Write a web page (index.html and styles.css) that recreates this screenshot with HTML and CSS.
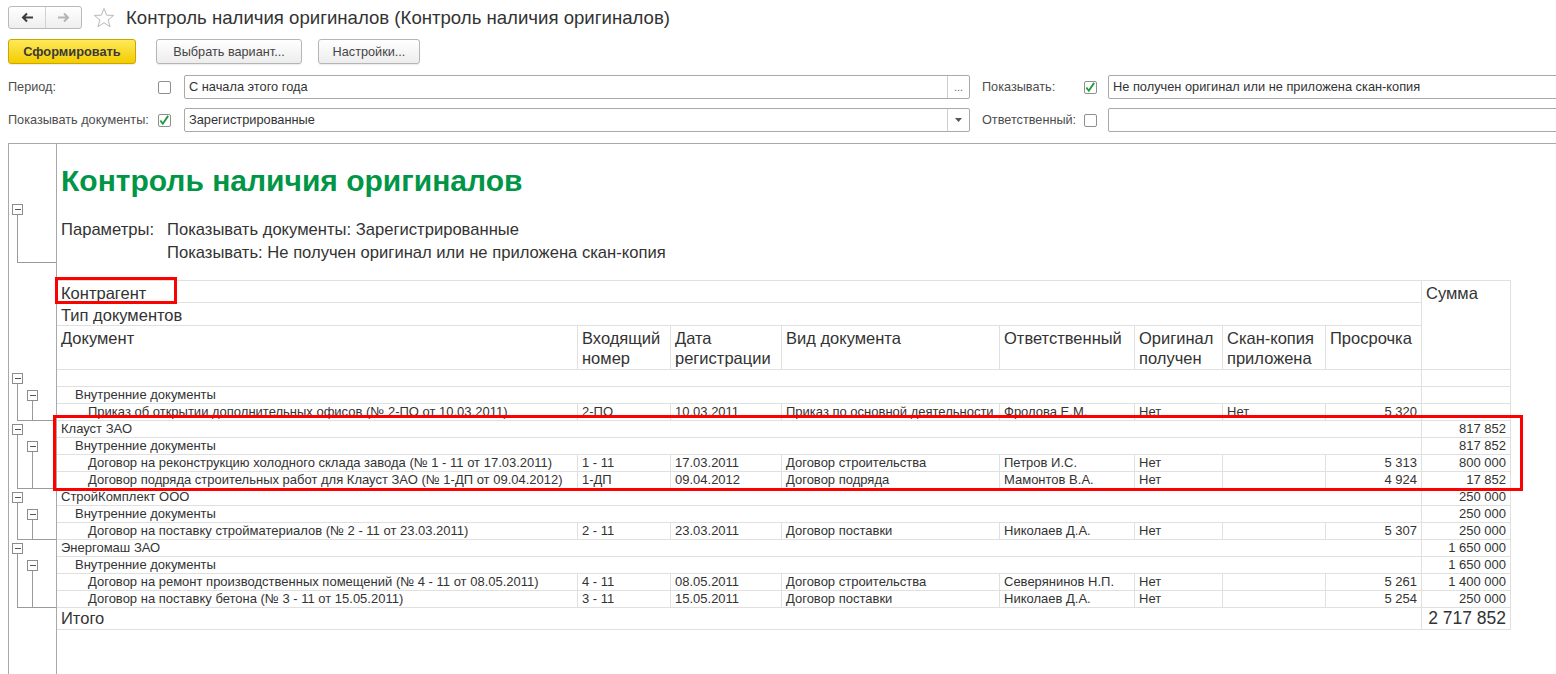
FILE: index.html
```html
<!DOCTYPE html>
<html lang="ru">
<head>
  <meta charset="UTF-8" />
  <title>Контроль наличия оригиналов</title>
  <link rel="stylesheet" href="styles.css">
</head>
<body>
  <div class="topbar">
    <div class="nav">
      <button class="nav-btn">
        <svg width="13" height="11" viewBox="0 0 13 11"><path d="M12 5.5H2M6 1.5L2 5.5L6 9.5" fill="none" stroke="#3c3c3c" stroke-width="2"/></svg>
      </button>
      <button class="nav-btn">
        <svg width="13" height="11" viewBox="0 0 13 11"><path d="M1 5.5H11M7 1.5L11 5.5L7 9.5" fill="none" stroke="#b4b4b4" stroke-width="2"/></svg>
      </button>
    </div>
    <svg class="star" width="22" height="22" viewBox="0 0 22 22">
      <polygon points="11,1.5 13.6,8.2 20.6,8.4 15.1,12.8 17.1,19.8 11,15.7 4.9,19.8 6.9,12.8 1.4,8.4 8.4,8.2" fill="none" stroke="#b8b8b8" stroke-width="1"/>
    </svg>
    <h1 class="page-title">Контроль наличия оригиналов (Контроль наличия оригиналов)</h1>
  </div>

  <div class="actions">
    <button class="btn btn-primary">Сформировать</button>
    <button class="btn btn-variant">Выбрать вариант...</button>
    <button class="btn btn-settings">Настройки...</button>
  </div>

  <div class="filters">
    <div class="filter-row">
      <span class="f-label">Период:</span>
      <span class="check"></span>
      <div class="field field-main">
        <span class="field-text">С начала этого года</span>
        <span class="field-btn">...</span>
      </div>
      <span class="f-label f-label-right">Показывать:</span>
      <span class="check">
        <svg width="13" height="13" viewBox="0 0 13 13"><path d="M2.5 6.5L5.2 10L11 1.5" fill="none" stroke="#1e9c3c" stroke-width="2"/></svg>
      </span>
      <div class="field field-side">
        <span class="field-text">Не получен оригинал или не приложена скан-копия</span>
      </div>
    </div>
    <div class="filter-row">
      <span class="f-label">Показывать документы:</span>
      <span class="check">
        <svg width="13" height="13" viewBox="0 0 13 13"><path d="M2.5 6.5L5.2 10L11 1.5" fill="none" stroke="#1e9c3c" stroke-width="2"/></svg>
      </span>
      <div class="field field-main">
        <span class="field-text">Зарегистрированные</span>
        <span class="field-btn">
          <svg width="7" height="4" viewBox="0 0 7 4"><path d="M0 0H7L3.5 4Z" fill="#555"/></svg>
        </span>
      </div>
      <span class="f-label f-label-right">Ответственный:</span>
      <span class="check"></span>
      <div class="field field-side"></div>
    </div>
  </div>

  <div class="report">
    <div class="gutter">
      <svg class="tree" width="47" height="226">
        <rect x="3.5" y="60.5" width="10" height="10" class="box"/>
        <path d="M5.5 65.5H11.5" class="minus"/>
        <path d="M8.5 71V118.5H47" class="line"/>
      </svg>
      <svg class="tree" width="47" height="51">
        <rect x="3.5" y="3.5" width="10" height="10" class="box"/>
        <path d="M5.5 8.5H11.5" class="minus"/>
        <rect x="18.5" y="20.5" width="10" height="10" class="box"/>
        <path d="M20.5 25.5H26.5" class="minus"/>
        <path d="M8.5 14V50.5H47M23.5 31V50.5" class="line"/>
      </svg>
      <svg class="tree" width="47" height="68">
        <rect x="3.5" y="3.5" width="10" height="10" class="box"/>
        <path d="M5.5 8.5H11.5" class="minus"/>
        <rect x="18.5" y="20.5" width="10" height="10" class="box"/>
        <path d="M20.5 25.5H26.5" class="minus"/>
        <path d="M8.5 14V67.5H47M23.5 31V67.5" class="line"/>
      </svg>
      <svg class="tree" width="47" height="51">
        <rect x="3.5" y="3.5" width="10" height="10" class="box"/>
        <path d="M5.5 8.5H11.5" class="minus"/>
        <rect x="18.5" y="20.5" width="10" height="10" class="box"/>
        <path d="M20.5 25.5H26.5" class="minus"/>
        <path d="M8.5 14V50.5H47M23.5 31V50.5" class="line"/>
      </svg>
      <svg class="tree" width="47" height="68">
        <rect x="3.5" y="3.5" width="10" height="10" class="box"/>
        <path d="M5.5 8.5H11.5" class="minus"/>
        <rect x="18.5" y="20.5" width="10" height="10" class="box"/>
        <path d="M20.5 25.5H26.5" class="minus"/>
        <path d="M8.5 14V67.5H47M23.5 31V67.5" class="line"/>
      </svg>
    </div>

    <div class="sheet">
      <h2 class="rep-title">Контроль наличия оригиналов</h2>
      <div class="params">
        <span>Параметры:</span>
        <span>Показывать документы: Зарегистрированные</span>
        <span></span>
        <span>Показывать: Не получен оригинал или не приложена скан-копия</span>
      </div>

      <div class="grid">
        <div class="head">
          <div class="hc hc-wide">Контрагент</div>
          <div class="hc hc-sum">Сумма</div>
          <div class="hc hc-wide">Тип документов</div>
          <div class="hc">Документ</div>
          <div class="hc">Входящий номер</div>
          <div class="hc">Дата регистрации</div>
          <div class="hc">Вид документа</div>
          <div class="hc">Ответственный</div>
          <div class="hc">Оригинал получен</div>
          <div class="hc">Скан-копия приложена</div>
          <div class="hc">Просрочка</div>
        </div>

        <div class="row row-group"><div class="c"></div><div class="c num"></div></div>
        <div class="row row-group"><div class="c lvl2">Внутренние документы</div><div class="c num"></div></div>
        <div class="row">
          <div class="c lvl3">Приказ об открытии дополнительных офисов (№ 2-ПО от 10.03.2011)</div>
          <div class="c">2-ПО</div><div class="c">10.03.2011</div><div class="c">Приказ по основной деятельности</div>
          <div class="c">Фролова Е.М.</div><div class="c">Нет</div><div class="c">Нет</div><div class="c num">5 320</div><div class="c num"></div>
        </div>

        <div class="row row-group"><div class="c">Клауст ЗАО</div><div class="c num">817 852</div></div>
        <div class="row row-group"><div class="c lvl2">Внутренние документы</div><div class="c num">817 852</div></div>
        <div class="row">
          <div class="c lvl3">Договор на реконструкцию холодного склада завода (№ 1 - 11 от 17.03.2011)</div>
          <div class="c">1 - 11</div><div class="c">17.03.2011</div><div class="c">Договор строительства</div>
          <div class="c">Петров И.С.</div><div class="c">Нет</div><div class="c"></div><div class="c num">5 313</div><div class="c num">800 000</div>
        </div>
        <div class="row">
          <div class="c lvl3">Договор подряда строительных работ для Клауст ЗАО (№ 1-ДП от 09.04.2012)</div>
          <div class="c">1-ДП</div><div class="c">09.04.2012</div><div class="c">Договор подряда</div>
          <div class="c">Мамонтов В.А.</div><div class="c">Нет</div><div class="c"></div><div class="c num">4 924</div><div class="c num">17 852</div>
        </div>

        <div class="row row-group"><div class="c">СтройКомплект ООО</div><div class="c num">250 000</div></div>
        <div class="row row-group"><div class="c lvl2">Внутренние документы</div><div class="c num">250 000</div></div>
        <div class="row">
          <div class="c lvl3">Договор на поставку стройматериалов (№ 2 - 11 от 23.03.2011)</div>
          <div class="c">2 - 11</div><div class="c">23.03.2011</div><div class="c">Договор поставки</div>
          <div class="c">Николаев Д.А.</div><div class="c">Нет</div><div class="c"></div><div class="c num">5 307</div><div class="c num">250 000</div>
        </div>

        <div class="row row-group"><div class="c">Энергомаш ЗАО</div><div class="c num">1 650 000</div></div>
        <div class="row row-group"><div class="c lvl2">Внутренние документы</div><div class="c num">1 650 000</div></div>
        <div class="row">
          <div class="c lvl3">Договор на ремонт производственных помещений (№ 4 - 11 от 08.05.2011)</div>
          <div class="c">4 - 11</div><div class="c">08.05.2011</div><div class="c">Договор строительства</div>
          <div class="c">Северянинов Н.П.</div><div class="c">Нет</div><div class="c"></div><div class="c num">5 261</div><div class="c num">1 400 000</div>
        </div>
        <div class="row">
          <div class="c lvl3">Договор на поставку бетона (№ 3 - 11 от 15.05.2011)</div>
          <div class="c">3 - 11</div><div class="c">15.05.2011</div><div class="c">Договор поставки</div>
          <div class="c">Николаев Д.А.</div><div class="c">Нет</div><div class="c"></div><div class="c num">5 254</div><div class="c num">250 000</div>
        </div>

        <div class="row row-group row-total"><div class="c">Итого</div><div class="c num">2 717 852</div></div>
      </div>
    </div>

    <div class="mark mark-head"></div>
    <div class="mark mark-rows"></div>
  </div>
</body>
</html>
```

FILE: styles.css
```css
* { box-sizing: border-box; }

html, body {
  margin: 0;
  overflow: hidden;
}

body {
  width: 1556px;
  height: 674px;
  font-family: 'Liberation Sans', Arial, sans-serif;
  color: #333;
  background: #fff;
}

/* top bar */
.topbar {
  display: flex;
  align-items: center;
  height: 23px;
  margin: 6px 0 0 8px;
}

.nav {
  display: flex;
  height: 23px;
  border: 1px solid #b9b9b9;
  border-radius: 3px;
  background: linear-gradient(#fff, #eee);
}

.nav-btn {
  width: 36px;
  padding: 0;
  border: none;
  background: none;
  display: flex;
  align-items: center;
  justify-content: center;
}

.nav-btn + .nav-btn { border-left: 1px solid #d2d2d2; }

.star { margin-left: 11px; }

.page-title {
  margin: 0 0 0 11px;
  font-size: 18.6px;
  font-weight: normal;
  color: #333;
  white-space: nowrap;
}

/* buttons */
.actions {
  display: flex;
  margin: 10px 0 0 8px;
}

.btn {
  height: 25px;
  padding: 0;
  font-family: inherit;
  font-size: 12.7px;
  color: #444;
  border: 1px solid #b5b5b5;
  border-radius: 3px;
  background: linear-gradient(#fff, #ededed);
  box-shadow: 0 1px 1px rgba(0,0,0,0.08);
}

.btn-primary {
  width: 128px;
  font-size: 12.8px;
  font-weight: bold;
  color: #3a3a3a;
  border-color: #c9a600;
  background: linear-gradient(#ffe95a, #f3cc00);
}

.btn-variant { width: 146px; margin-left: 20px; }
.btn-settings { width: 102px; margin-left: 16px; }

/* filters */
.filters { margin-top: 11px; }

.filter-row {
  display: flex;
  align-items: center;
  height: 24px;
  margin-left: 8px;
}

.filter-row + .filter-row { margin-top: 9px; }

.f-label {
  width: 150px;
  font-size: 12.7px;
  color: #4d4d4d;
  white-space: nowrap;
}

.f-label-right {
  width: 102px;
  margin-left: 12px;
}

.check {
  width: 13px;
  height: 13px;
  border: 1px solid #8f8f8f;
  border-radius: 2px;
  background: #fff;
  display: flex;
}

.check svg { margin: -1px 0 0 -1px; }

.field {
  display: flex;
  height: 24px;
  border: 1px solid #a9a9a9;
  border-radius: 2px;
  background: #fff;
}

.field-main {
  width: 786px;
  margin-left: 13px;
}

.field-side {
  flex: 1;
  margin-left: 11px;
  margin-right: -20px;
}

.field-text {
  flex: 1;
  padding-left: 4px;
  font-size: 12.8px;
  line-height: 22px;
  color: #333;
}

.field-btn {
  width: 22px;
  border-left: 1px solid #cdcdcd;
  display: flex;
  align-items: center;
  justify-content: center;
  font-size: 11px;
  color: #666;
}

/* report */
.report {
  position: relative;
  display: flex;
  height: 531px;
  margin: 11px 0 0 8px;
  border-top: 1px solid #a8a8a8;
  border-left: 1px solid #a8a8a8;
}

.gutter {
  width: 48px;
  flex: none;
  border-right: 1px solid #a8a8a8;
}

.tree {
  display: block;
  shape-rendering: crispEdges;
}

.tree .box { fill: #fff; stroke: #8c8c8c; }
.tree .minus { stroke: #555; fill: none; }
.tree .line { stroke: #9a9a9a; fill: none; }

.sheet {
  flex: 1;
}

.rep-title {
  margin: 20px 0 0 4px;
  font-size: 30px;
  line-height: 34px;
  font-weight: bold;
  color: #009646;
}

.params {
  display: grid;
  grid-template-columns: 106px auto;
  margin: 20px 0 0 4px;
  font-size: 16.6px;
  line-height: 23px;
  color: #333;
}

/* table */
.grid {
  --cols: 521px 93px 111px 218px 135px 88px 103px 96px 89px;
  width: 1454px;
  margin-top: 16px;
  border-top: 1px solid #e0e0e0;
}

.head {
  display: grid;
  grid-template-columns: var(--cols);
  grid-template-rows: 22px 23px 44px;
}

.hc {
  padding: 2px 4px 0;
  font-size: 16.5px;
  line-height: 20px;
  border-right: 1px solid #e0e0e0;
  border-bottom: 1px solid #e0e0e0;
}

.hc-wide { grid-column: 1 / 9; }
.hc-sum { grid-column: 9; grid-row: 1 / 4; }

.row {
  display: grid;
  grid-template-columns: var(--cols);
  height: 17px;
}

.row-group { grid-template-columns: 1365px 89px; }

.c {
  padding: 0 4px;
  font-size: 13px;
  line-height: 16px;
  white-space: nowrap;
  overflow: hidden;
  border-right: 1px solid #e0e0e0;
  border-bottom: 1px solid #e0e0e0;
}

.lvl2 { padding-left: 18px; }
.lvl3 { padding-left: 31px; }

.num { text-align: right; }

.row-total { height: 22px; }
.row-total .c { font-size: 16.5px; line-height: 21px; }
.row-total .num { font-size: 17.5px; }

/* red annotation frames */
.mark {
  position: absolute;
  border: 3px solid #f00;
}

.mark-head {
  left: 46px;
  top: 133px;
  width: 122px;
  height: 27px;
}

.mark-rows {
  left: 44px;
  top: 271px;
  width: 1470px;
  height: 76px;
}
```
